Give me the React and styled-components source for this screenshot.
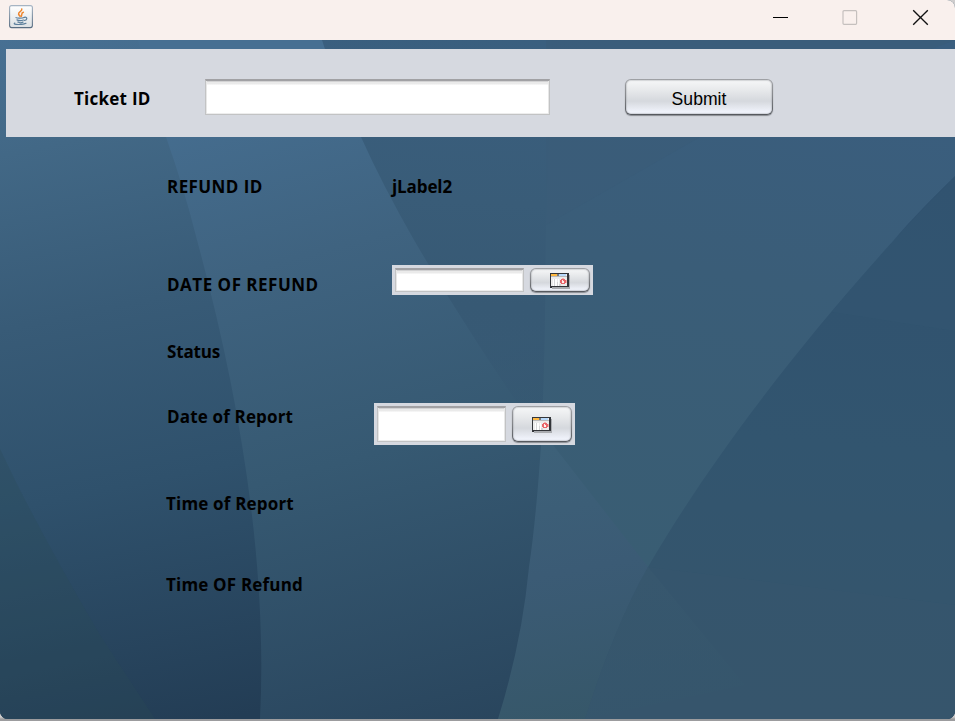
import React from "react";
import styled, { createGlobalStyle } from "styled-components";

const GlobalStyle = createGlobalStyle`
  *, *::before, *::after { box-sizing: border-box; }
  body { margin: 0; background: #a09fa1; overflow: hidden; }
`;

const Window = styled.div`
  width: 955px;
  height: 719px;
  display: flex;
  flex-direction: column;
  overflow: hidden;
  border-radius: 0 8px 8px 8px;
  background: #35556b;
  font-family: "Open Sans", "Noto Sans", sans-serif;
  color: #000;
`;

const Frame = styled.div`
  height: 721px;
  background: linear-gradient(#cfcdcd 0 700px, #cfcdcd 717px, #9c9c9e 719px);
`;

const TitleBar = styled.header`
  flex: none;
  height: 40px;
  padding: 5px 26px 0 9px;
  display: flex;
  justify-content: space-between;
  background: #f9f0ed;
`;

const WindowControls = styled.div`
  display: flex;
  gap: 53px;
  padding-top: 4px;
`;

const Content = styled.main`
  flex: 1;
  display: grid;
  grid-template: minmax(0, 1fr) / minmax(0, 1fr);

  > * { grid-area: 1 / 1; }
`;

const Layer = styled.div`
  display: flex;
  flex-direction: column;
  padding-top: 9px;
`;

const TicketPanel = styled.section`
  margin-left: 6px;
  height: 88px;
  display: flex;
  align-items: flex-start;
  padding: 30px 0 0 68px;
  background: #d6d9e0;
`;

const Label = styled.label`
  display: block;
  width: ${(p) => p.$width}px;
  height: 24px;
  line-height: 24px;
  font-size: 17px;
  font-weight: 700;
  white-space: nowrap;
  letter-spacing: ${(p) => p.$spacing || 0}px;
`;

const TicketLabel = styled(Label)`
  margin-top: 8px;
`;

const Field = styled.input`
  display: block;
  flex: none;
  width: ${(p) => p.$width}px;
  height: ${(p) => p.$height}px;
  padding: 4px 6px;
  outline: 0;
  border: 1px solid #c2c3c4;
  border-top: 2px solid #a1a1a4;
  border-radius: 0;
  background: linear-gradient(#d2d2d3 0 1px, #eaeaea 1px 3px, #fff 4px);
  box-shadow: inset 1px 0 #e7e7e7, inset -1px 0 #e7e7e7, inset 0 -1px #ededed;
`;

const Button = styled.button`
  flex: none;
  width: ${(p) => p.$width}px;
  height: ${(p) => p.$height}px;
  display: flex;
  align-items: center;
  justify-content: center;
  padding: 2px 0 0;
  border: 1px solid transparent;
  border-radius: ${(p) => p.$radius}px;
  background:
    linear-gradient(#f6f7f8 0%, #e7e9eb 30%, #d5d8dd 62%, #f0f3fb 94%) padding-box,
    linear-gradient(#9fa1a5, #86888c 45%, #55585d) border-box;
  box-shadow:
    inset 0 0 1px 1px rgba(150, 153, 159, 0.35),
    0 1px 1px rgba(85, 88, 93, 0.6);
  color: #000;
  font: 17.6px "Liberation Sans", Arial, sans-serif;
`;

const SubmitButton = styled(Button)`
  margin: 0 0 0 75px;
  padding-top: 4px;
`;

const Details = styled.section`
  display: grid;
  grid-template-rows: 98px 67px 65px 87px 81px 40px;
  padding: 38px 0 0 167px;
`;

const Row = styled.div`
  display: flex;
  align-items: flex-start;
  margin-left: ${(p) => p.$shift || 0}px;
`;

const DatePicker = styled.div`
  display: flex;
  gap: 6px;
  width: 201px;
  height: ${(p) => p.$height}px;
  margin: ${(p) => p.$top}px 0 0 ${(p) => p.$left}px;
  padding: 3px;
  background: #d6d9e0;
`;

const Backdrop = () => (
  <svg width="955" height="679" viewBox="0 40 955 679" aria-hidden="true">
    <defs>
      <linearGradient id="left" gradientUnits="userSpaceOnUse" x1="0" y1="40" x2="145" y2="735">
        <stop offset="0" stopColor="#477093" />
        <stop offset=".16" stopColor="#426886" />
        <stop offset=".4" stopColor="#385b77" />
        <stop offset=".65" stopColor="#2f516c" />
        <stop offset="1" stopColor="#233d55" />
      </linearGradient>
      <linearGradient id="middle" gradientUnits="userSpaceOnUse" x1="220" y1="75" x2="400" y2="750">
        <stop offset="0" stopColor="#466f92" />
        <stop offset=".28" stopColor="#3f6380" />
        <stop offset=".58" stopColor="#365972" />
        <stop offset="1" stopColor="#29455d" />
      </linearGradient>
      <linearGradient id="upper" gradientUnits="userSpaceOnUse" x1="530" y1="40" x2="510" y2="450">
        <stop offset="0" stopColor="#3a5f7f" />
        <stop offset=".4" stopColor="#395c78" />
        <stop offset=".65" stopColor="#375974" />
        <stop offset="1" stopColor="#345570" stopOpacity="0" />
      </linearGradient>
      <linearGradient id="right" gradientUnits="userSpaceOnUse" x1="760" y1="40" x2="660" y2="620">
        <stop offset="0" stopColor="#3a5e7f" />
        <stop offset=".4" stopColor="#3a5d78" />
        <stop offset="1" stopColor="#395d72" />
      </linearGradient>
      <linearGradient id="corner" gradientUnits="userSpaceOnUse" x1="900" y1="180" x2="850" y2="719">
        <stop offset="0" stopColor="#30516f" />
        <stop offset=".5" stopColor="#32556f" />
        <stop offset=".76" stopColor="#34556d" />
        <stop offset="1" stopColor="#35556b" />
      </linearGradient>
      <linearGradient id="wedge" gradientUnits="userSpaceOnUse" x1="560" y1="445" x2="610" y2="719">
        <stop offset="0" stopColor="#3d6179" />
        <stop offset=".45" stopColor="#3b5b75" />
        <stop offset="1" stopColor="#365769" />
      </linearGradient>
      <linearGradient id="overlap" gradientUnits="userSpaceOnUse" x1="650" y1="560" x2="670" y2="719">
        <stop offset="0" stopColor="#39596f" />
        <stop offset="1" stopColor="#35566c" />
      </linearGradient>
    </defs>
    <path fill="url(#middle)" d="M0 40H955V719H0Z" />
    <path fill="url(#left)" d="M0 40H138L166 137Q184 188 197 240C239 394 268 563 260 719H0Z" />
    <path fill="#2a4a55" fillOpacity=".28" d="M0 449L15 480Q48 546 100 635L155 719H0Z" />
    <path fill="url(#right)" d="M541 445Q545 370 546 230L480 40H955V620H620Z" />
    <path fill="url(#upper)" d="M322 40Q335 82 361 137Q382 184 414 240Q466 329 541 438Q545 370 546 230L552 40Z" />
    <path fill="#395c78" fillOpacity=".5" d="M546 40H955L700 137L546 225Z" />
    <path fill="url(#wedge)" d="M541 445H553L648 567L750 719H498Q522 642 529 567Q536 520 541 445Z" />
    <path fill="url(#corner)" d="M955 176Q912 218 894 240C794 350 706 467 648 567Q615 625 585 719H955Z" />
    <path fill="#39607b" fillOpacity=".12" d="M955 176Q884 247 832 312L955 331Z" />
    <path fill="#3a5a72" fillOpacity=".15" d="M648 567L955 605V719H585Q615 625 648 567Z" />
    <path fill="url(#overlap)" fillOpacity=".55" d="M648 567L745 685L585 719Q615 625 648 567Z" />
  </svg>
);

const JavaIcon = () => (
  <svg width="24" height="24" viewBox="0 0 24 24">
    <defs>
      <linearGradient id="tile" x2="0" y2="1">
        <stop stopColor="#fff" />
        <stop offset="1" stopColor="#dce0e3" />
      </linearGradient>
      <linearGradient id="tileEdge" x2="0" y2="1">
        <stop stopColor="#a6b4c3" />
        <stop offset="1" stopColor="#586d82" />
      </linearGradient>
    </defs>
    <rect x=".6" y=".6" width="22.8" height="22" rx="2" fill="url(#tile)" stroke="url(#tileEdge)" strokeWidth="1.1" />
    <g fill="none" strokeLinecap="round">
      <path stroke="#ee862e" strokeWidth="1.5" d="M12.8 4C13.5 6.6 8.8 6.8 9.6 9.2C9.8 10 10.8 10.6 11 11.2M14.4 7.3C11.6 8.3 13.5 9.5 12.3 11.2" />
      <path stroke="#5c7f9c" strokeWidth="1.2" d="M7 12.6C8 13.4 13.5 13.3 15 12.4M8 14.9C9.5 15.7 13 15.6 14.5 15M8.8 17.1C10 17.8 12.8 17.7 14 17.1M15.5 12.3C18.8 11.6 18.3 15 15.6 15.4M5.8 18.1C2.6 19.8 14.2 20 17 18.3" />
    </g>
  </svg>
);

const CalendarIcon = () => (
  <svg width="20" height="16" viewBox="0 0 20 16" shapeRendering="crispEdges">
    <path fill="#aaacb0" d="M2 2H20V16H2Z" />
    <path fill="#333539" d="M0 0H19V14H2V15H0Z" />
    <path fill="#ececec" d="M1 1H17V13H1Z" />
    <path fill="#ffb83f" d="M1 1H7V3H1Z" />
    <path fill="#77797b" d="M7 1H9V3H7Z" />
    <path fill="#b7d9fb" d="M9 1H16V3H9Z" />
    <path fill="#b9babb" d="M1 3H17V4H1Z" />
    <path fill="#fff" d="M3 6H4V13H3ZM5 6H7V13H5ZM8 6H9V13H8Z" />
    <path fill="#d5d6d7" d="M4 6H5V13H4ZM7 9H8V13H7ZM9 11H11V13H9Z" />
    <path fill="#e8666b" d="M11 6H15V7H16V10H15V11H11V10H10V7H11Z" />
    <path fill="#fff1ec" d="M12 7H13V8H14V10H12Z" />
    <path fill="#f6b0ac" d="M12 5H14V6H12ZM16 7H17V10H16Z" />
  </svg>
);

const MinimizeIcon = () => (
  <svg width="17" height="17" viewBox="0 0 17 17">
    <path stroke="#000" d="M1 8.5H16" shapeRendering="crispEdges" />
  </svg>
);

const MaximizeIcon = () => (
  <svg width="17" height="17" viewBox="0 0 17 17">
    <rect x="1" y="1.7" width="13.6" height="13.6" rx="1" fill="none" stroke="#c5c0be" strokeWidth="1.2" />
  </svg>
);

const CloseIcon = () => (
  <svg width="17" height="17" viewBox="0 0 17 17">
    <path stroke="#111" strokeWidth="1.35" d="M1.2 1.2L15.8 15.8M15.8 1.2L1.2 15.8" />
  </svg>
);

const DateInput = ({ id, height, top, left }) => (
  <DatePicker $height={height} $top={top} $left={left}>
    <Field id={id} $width={129} $height={height - 6} />
    <Button $width={60} $height={height - 6} $radius={6} aria-label="Open calendar">
      <CalendarIcon />
    </Button>
  </DatePicker>
);

export default function App() {
  return (
    <Frame>
      <GlobalStyle />
      <Window>
        <TitleBar>
          <JavaIcon />
          <WindowControls>
            <MinimizeIcon />
            <MaximizeIcon />
            <CloseIcon />
          </WindowControls>
        </TitleBar>
        <Content>
          <Backdrop />
          <Layer>
            <TicketPanel>
              <TicketLabel htmlFor="ticket" $width={131} $spacing={0.25}>Ticket ID</TicketLabel>
              <Field id="ticket" $width={345} $height={36} />
              <SubmitButton $width={148} $height={36} $radius={6}>Submit</SubmitButton>
            </TicketPanel>
            <Details>
              <Row>
                <Label as="span" $width={225} $spacing={0.42}>REFUND ID</Label>
                <Label as="span" $width={80} $spacing={-0.1}>jLabel2</Label>
              </Row>
              <Row>
                <Label htmlFor="refundDate" $width={225} $spacing={0.5}>DATE OF REFUND</Label>
                <DateInput id="refundDate" height={30} top={-8} left={0} />
              </Row>
              <Row>
                <Label as="span" $width={225} $spacing={-0.15}>Status</Label>
              </Row>
              <Row>
                <Label htmlFor="reportDate" $width={207} $spacing={0.16}>Date of Report</Label>
                <DateInput id="reportDate" height={42} top={-2} left={0} />
              </Row>
              <Row $shift={-1}>
                <Label as="span" $width={225} $spacing={0.18}>Time of Report</Label>
              </Row>
              <Row $shift={-1}>
                <Label as="span" $width={225} $spacing={0.18}>Time OF Refund</Label>
              </Row>
            </Details>
          </Layer>
        </Content>
      </Window>
    </Frame>
  );
}
